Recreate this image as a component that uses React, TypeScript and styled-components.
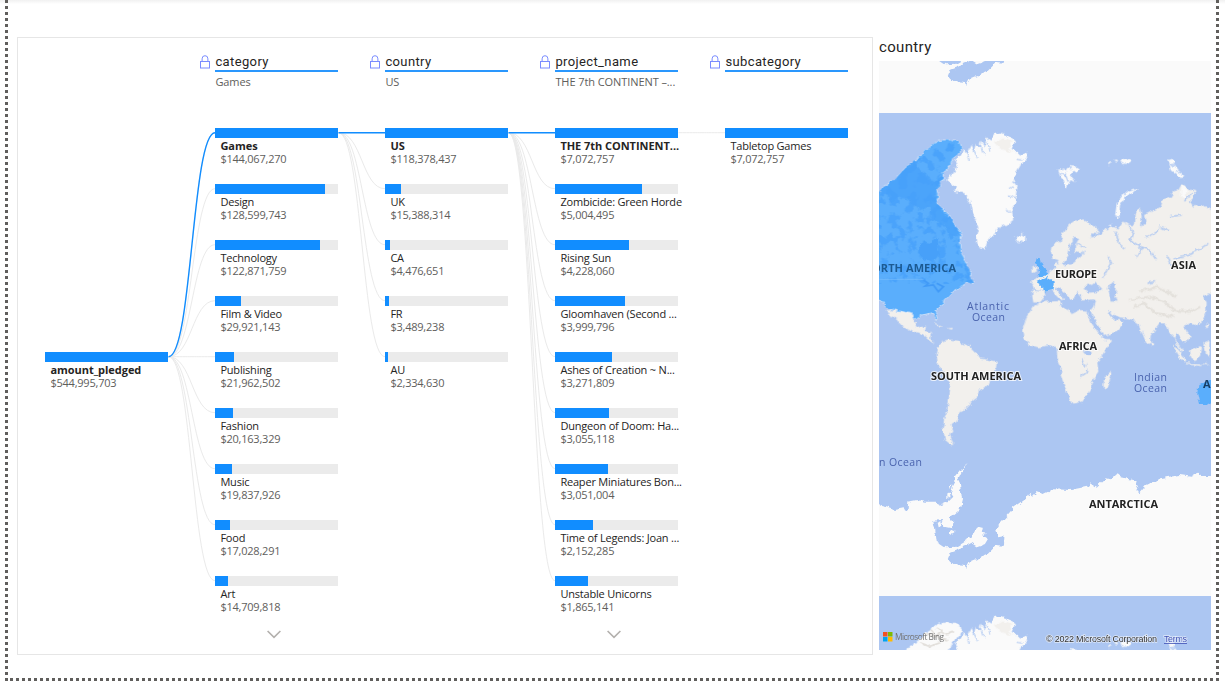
import React from "react";
import styled, { createGlobalStyle } from "styled-components";

const GlobalStyle = createGlobalStyle`
  * { box-sizing: border-box; }
  body { margin: 0; background: #fff; }
`;

const BLUE = "#118dff";
const BAR_W = 123;
const ROW_H = 56;

/* ---------- page ---------- */

const Page = styled.div`
  width: 1225px;
  height: 686px;
  overflow: hidden;
  padding-left: 5px;
  background: linear-gradient(#f1f1f1, #fff 4px);
`;

const Canvas = styled.main`
  width: 1214px;
  height: 681px;
  display: flex;
  align-items: flex-start;
  gap: 6px;
  padding: 37px 0 0 12px;
  background:
    repeating-linear-gradient(180deg, #605e5c 0 3px, transparent 3px 6px) left top / 3px 100% no-repeat,
    repeating-linear-gradient(180deg, #605e5c 0 3px, transparent 3px 6px) right top / 3px 100% no-repeat,
    repeating-linear-gradient(90deg, #605e5c 0 3px, transparent 3px 6px) 5px 678px / 1206px 3px no-repeat;
`;

/* ---------- decomposition tree ---------- */

const TreeCard = styled.section`
  flex: none;
  width: 856px;
  height: 618px;
  border: 1px solid #e6e6e6;
  display: flex;
  padding-left: 27.4px;
  font-family: "Open Sans", "Noto Sans", sans-serif;
`;

const Column = styled.div`
  width: ${BAR_W}px;
  flex: none;
  display: flex;
  flex-direction: column;
`;

const ColumnHead = styled.header`
  height: 90px;
  padding-top: 15px;
  margin-left: -15px;
`;

const HeadTitle = styled.div`
  display: flex;
  align-items: center;
  height: 17px;
  gap: 5px;
  font: 13px/17px Roboto, sans-serif;
  letter-spacing: 0.38px;
  color: #252423;
  white-space: nowrap;
`;

const HeadRule = styled.div`
  height: 2px;
  margin: 0 0 0 15px;
  background: #2a97fd;
`;

const HeadValue = styled.div`
  margin: 2px 0 0 15px;
  font-size: 11px;
  line-height: 16px;
  letter-spacing: -0.08px;
  color: #605e5c;
  white-space: nowrap;
`;

const Node = styled.div`
  height: ${ROW_H}px;
`;

const Track = styled.div`
  height: 10px;
  background: #ebebeb;
`;

const Fill = styled.div`
  height: 10px;
  background: ${BLUE};
`;

const NodeName = styled.div<{ $bold?: boolean }>`
  padding: 1px 0 0 5px;
  height: 15px;
  font-size: 11px;
  line-height: 14px;
  font-weight: ${(p) => (p.$bold ? 700 : 400)};
  letter-spacing: ${(p) => (p.$bold ? "-0.04px" : "-0.2px")};
  color: #252423;
  white-space: nowrap;
`;

const NodeValue = styled.div`
  padding-left: 5px;
  font-size: 11px;
  line-height: 12px;
  letter-spacing: -0.22px;
  color: #605e5c;
`;

const More = styled.div`
  display: flex;
  justify-content: center;
  margin: -2px 0 0 -6px;
`;

const Links = styled.svg`
  flex: none;
  width: 47px;
  height: 616px;
  fill: none;
`;

type Item = { name: string; value: number };
type Level = { field: string; chosen?: string; items: Item[]; more?: boolean; open?: boolean };

const LEVELS: Level[] = [
  {
    field: "category",
    chosen: "Games",
    more: true,
    open: true,
    items: [
      { name: "Games", value: 144067270 },
      { name: "Design", value: 128599743 },
      { name: "Technology", value: 122871759 },
      { name: "Film & Video", value: 29921143 },
      { name: "Publishing", value: 21962502 },
      { name: "Fashion", value: 20163329 },
      { name: "Music", value: 19837926 },
      { name: "Food", value: 17028291 },
      { name: "Art", value: 14709818 },
    ],
  },
  {
    field: "country",
    chosen: "US",
    open: true,
    items: [
      { name: "US", value: 118378437 },
      { name: "UK", value: 15388314 },
      { name: "CA", value: 4476651 },
      { name: "FR", value: 3489238 },
      { name: "AU", value: 2334630 },
    ],
  },
  {
    field: "project_name",
    chosen: "THE 7th CONTINENT –...",
    more: true,
    open: true,
    items: [
      { name: "THE 7th CONTINENT...", value: 7072757 },
      { name: "Zombicide: Green Horde", value: 5004495 },
      { name: "Rising Sun", value: 4228060 },
      { name: "Gloomhaven (Second ...", value: 3999796 },
      { name: "Ashes of Creation ~ N...", value: 3271809 },
      { name: "Dungeon of Doom: Ha...", value: 3055118 },
      { name: "Reaper Miniatures Bon...", value: 3051004 },
      { name: "Time of Legends: Joan ...", value: 2152285 },
      { name: "Unstable Unicorns", value: 1865141 },
    ],
  },
  { field: "subcategory", items: [{ name: "Tabletop Games", value: 7072757 }] },
];

const money = (n: number) => "$" + n.toLocaleString("en-US");

const LockIcon = () => (
  <svg width="10" height="14" viewBox="0 0 10 14" fill="none" stroke="#7a8cff">
    <path d="M2.1 6.5V3.8a2.9 3.1 0 0 1 5.8 0v2.7" />
    <rect x="0.5" y="6.5" width="9" height="6.5" />
  </svg>
);

const Chevron = () => (
  <svg width="14" height="9" viewBox="0 0 14 9" fill="none" stroke="#b3b0ad" strokeWidth="1.6">
    <path d="M0.6 1 7 7.4 13.4 1" />
  </svg>
);

const TreeNode = ({ item, max, bold }: { item: Item; max: number; bold?: boolean }) => (
  <Node>
    <Track>
      <Fill style={{ width: (item.value / max) * BAR_W }} />
    </Track>
    <NodeName $bold={bold}>{item.name}</NodeName>
    <NodeValue>{money(item.value)}</NodeValue>
  </Node>
);

const FIRST_Y = 94.7;

const LinkFan = ({ from, count, active }: { from: number; count: number; active: boolean }) => {
  const y0 = FIRST_Y + from * ROW_H;
  const path = (i: number) => {
    const y1 = FIRST_Y + i * ROW_H;
    return `M0.5 ${y0}C24 ${y0} 24 ${y1} 47 ${y1}`;
  };
  return (
    <Links viewBox="0 0 47 616">
      {Array.from({ length: count }, (_, i) => (
        <path key={i} d={path(i)} stroke="#eaeaea" />
      ))}
      {active && <path d={path(0)} stroke={BLUE} strokeWidth="1.4" />}
    </Links>
  );
};

const RootSpacer = styled.div`
  height: 314px;
`;

const Tree = () => (
  <TreeCard>
    <Column>
      <RootSpacer />
      <TreeNode item={{ name: "amount_pledged", value: 544995703 }} max={544995703} bold />
    </Column>
    {LEVELS.map((level, i) => (
      <React.Fragment key={level.field}>
        <LinkFan from={i === 0 ? 4 : 0} count={level.items.length} active={!!level.open} />
        <Column>
          <ColumnHead>
            <HeadTitle>
              <LockIcon />
              {level.field}
            </HeadTitle>
            <HeadRule />
            <HeadValue>{level.chosen}</HeadValue>
          </ColumnHead>
          {level.items.map((item, k) => (
            <TreeNode key={item.name} item={item} max={level.items[0].value} bold={k === 0 && level.open} />
          ))}
          {level.more && (
            <More>
              <Chevron />
            </More>
          )}
        </Column>
      </React.Fragment>
    ))}
  </TreeCard>
);

/* ---------- map ---------- */

const MapCard = styled.section`
  width: 332px;
`;

const MapTitle = styled.h2`
  margin: 0;
  height: 24px;
  font: 400 15px/20px Roboto, sans-serif;
  letter-spacing: 0.35px;
  color: #252423;
`;

const MapView = styled.svg`
  display: block;
  width: 332px;
  height: 589px;
  background: #acc6f2;
`;

const LabelText = styled.text`
  font: 700 11px "Open Sans", sans-serif;
  fill: #222;
  stroke: rgba(255, 255, 255, 0.75);
  stroke-width: 2px;
  paint-order: stroke;
`;

const OceanText = styled.text`
  font: 10.5px "Open Sans", sans-serif;
  fill: #4a63ae;
`;

const CreditText = styled.text`
  font: 9px "Liberation Sans", sans-serif;
  fill: #333;
  stroke: rgba(255, 255, 255, 0.6);
  stroke-width: 1.5px;
  paint-order: stroke;
`;

const LAND = "#f2f0ed";
const ICE = "#fafafa";
const SEA = "#acc6f2";
const PICKED = "#5aaefc";

const AMERICA =
  "M20 250 40 232 55 222 60 212 78 205 95 185 120 160 132 152 138 156 145 148 152 138 165 120 180 112 195 100 215 90 235 90 255 90 272 102 275 120 262 135 248 145 240 160 230 180 218 190 222 205 210 212 212 230 200 240 205 255 200 280 212 290 225 305 245 325 250 340 272 365 272 380 268 395 275 430 285 455 300 480 300 500 312 515 305 522 290 515 270 535 250 545 240 555 225 570 222 582 210 590 195 605 202 625 198 632 190 615 180 610 155 615 130 628 125 612 100 605 60 598 45 590 30 570 20 560Z";

/* One full turn of the world, in thirds of a pixel. */
const World = ({ top, picked }: { top: number; picked?: boolean }) => (
  <g transform={`translate(870 ${top}) scale(0.33333)`}>
    <g filter="url(#coast)">
      <path fill={ICE} d="M232 205 250 190 262 165 255 150 275 135 282 118 290 135 302 108 310 128 318 100 328 112 332 92 345 110 348 82 362 92 375 72 395 68 415 78 435 95 425 115 440 130 455 138 470 125 475 145 455 160 440 185 430 215 442 230 438 250 440 275 425 300 430 330 410 345 390 350 380 365 360 385 350 400 345 418 330 415 322 400 320 375 325 355 315 330 305 300 300 275 285 250 250 245 258 232 240 220Z" />
      <path fill={LAND} d="M375 95 400 85 425 95 415 115 430 128 400 120 385 112Z" />
      <path fill="none" stroke={SEA} strokeWidth="3" d="M290 130 298 155M310 115 322 145M330 105 345 135M350 95 362 125M432 235 418 232M438 262 412 258M425 310 408 300M305 330 318 328M455 150 440 148" />
      <path fill={ICE} d="M435 385 440 376 450 378 455 372 466 378 465 390 448 400Z" />
      <path fill={LAND} d="M484 475 498 467 500 485 485 489ZM487 542 520 545 524 560 510 577 490 577 487 560Z" />
      <path fill={LAND} d="M50 600 62 625 75 620 90 645 130 665 155 670 165 678 185 695 197 702 180 682 187 668 165 663 168 650 150 652 140 648 130 630 125 612 100 603Z" />
      <path fill={LAND} d="M205 710 215 695 235 688 265 692 275 700 300 710 320 730 325 745 350 748 380 755 378 775 360 805 355 825 330 840 325 860 305 875 300 885 285 900 265 910 260 935 245 945 250 965 240 975 250 1002 240 1002 225 990 218 955 222 930 232 905 235 880 240 840 240 810 220 785 203 760 200 735ZM190 638 205 642 220 650 205 648ZM232 655 248 653 246 659Z" />
      <g transform="translate(510 0)">
        <path fill={LAND} d="M20 490 38 478 45 470 48 455 60 462 75 465 95 460 120 440 130 430 135 425 150 400 150 385 175 375 190 365 195 352 205 362 215 350 235 355 250 335 265 345 285 345 287 310 300 292 305 320 303 350 318 340 312 315 335 305 360 290 365 270 390 260 400 245 415 240 425 222 440 235 465 240 467 255 450 275 460 290 480 285 520 300 520 555 505 550 490 562 500 580 498 610 485 635 465 645 450 640 430 650 440 665 452 680 440 695 425 690 412 670 405 685 415 705 428 722 423 725 410 705 400 680 385 665 375 640 360 640 345 660 332 680 330 700 320 702 305 665 300 645 280 630 265 625 240 622 215 612 206 600 202 604 214 620 228 632 238 626 250 640 232 662 192 678 165 630 150 603 160 590 165 575 160 568 125 572 122 560 115 545 105 560 90 567 82 555 60 535 48 530 48 540 68 560 75 568 65 570 50 555 35 540 15 545-15 540-20 525-30 512 0 500Z" />
        <path fill={LAND} d="M35 410 50 400 62 390 68 370 80 350 100 335 120 325 150 340 165 350 178 360 170 372 150 370 150 380 165 385 155 400 140 420 120 430 105 425 105 405 118 385 105 380 90 405 85 440 70 460 60 465 55 450 38 445 32 425Z" />
        <path fill={LAND} d="M5 577-20 590-40 620-53 660-50 685-30 705-5 712 30 705 50 715 52 745 65 775 62 795 75 830 90 875 95 882 125 875 150 840 158 810 175 785 172 755 190 730 217 690 195 690 178 672 155 640 138 602 120 600 95 612 85 597 65 590 60 575 50 573 25 575Z" />
        <path fill={LAND} d="M190 825 195 800 212 785 213 800 203 832 193 838ZM334 695 342 700 340 707 334 704ZM400 710 412 715 440 755 436 758 420 745ZM440 760 485 764 484 768 442 764ZM450 722 478 708 486 715 483 738 465 750 453 742ZM495 650 505 640 503 660ZM490 700 512 690 508 740 495 730ZM480 760 508 763 500 766Z" />
        <path fill={SEA} d="M130 535 145 520 155 525 165 518 187 540 170 546 145 548ZM203 535 218 516 228 522 222 536 232 550 226 560 233 575 215 575 210 555ZM128 724 142 720 152 728 150 738 138 735Z" />
        <path fill="none" stroke={SEA} strokeWidth="4" d="M265 350 280 365 270 390 300 410 330 420 350 450M225 365 240 405 255 415M205 440 212 460 190 500M385 440 395 470M320 380 345 370 360 350M390 320 425 315M400 445 460 430 505 400M365 350 385 360M320 520 345 515M110 400 135 410M128 745 138 770M145 780 120 800M310 410 290 440M460 250 430 270" />
        <path fill="none" stroke="#e4e1dc" strokeWidth="7" d="M270 570 330 560 380 580 400 600 450 605 480 590M280 590 310 580 350 610 400 620M300 545 350 530 410 560" />
        <path fill={ICE} d="M225 315 230 280 245 260 270 240 290 235 285 245 255 262 240 285 238 322ZM55 180 75 175 80 185 90 168 120 172 112 185 95 188 92 200 107 218 92 210 78 236 72 215 62 205ZM385 150 400 146 405 165 417 182 433 198 425 210 412 195 393 182ZM425 225 440 240 438 262 422 258ZM200 160 212 156 208 165ZM222 150 236 148 230 155ZM240 155 255 145 275 150 262 160 250 162ZM205 345 212 340 214 350Z" />
        <path fill="none" stroke={SEA} strokeWidth="4" d="M60 190 80 200M75 190 85 215M95 180 88 170M390 165 408 162M408 186 425 182" />
      </g>
      <g transform="translate(0 1020)">
        <path fill={ICE} d="M20 165 50 172 75 180 100 175 112 182 115 155 140 150 165 155 195 155 215 165 235 155 250 140 243 130 248 110 256 95 254 80 270 60 293 42 276 62 264 88 270 100 276 150 268 180 250 195 235 205 250 215 245 235 222 230 215 210 190 212 195 235 200 275 225 292 260 290 285 275 290 265 305 260 310 245 325 230 342 235 335 245 348 248 338 256 352 265 340 285 325 290 305 278 275 295 240 308 233 325 250 342 285 345 287 360 300 335 350 315 380 285 402 287 403 258 385 262 378 240 390 220 430 175 470 145 480 128 490 137 500 126 520 132 550 118 600 120 660 108 660 100 680 113 710 85 722 88 740 70 755 82 800 92 797 105 808 130 830 105 870 85 930 75 965 80 985 68 1000 78 1050 78 1050 400 0 400 0 165ZM200 218 212 214 214 228 203 232ZM238 250 254 241 250 251 240 256ZM232 130 240 128 242 145 232 145ZM238 105 244 100 243 118Z" />
      </g>
    </g>
    <rect x="20" y="1390" width="1010" height="68" fill={ICE} />
    <g filter="url(#coast)">
      <path d={AMERICA} fill={picked ? PICKED : ICE} stroke="#e9f0fb" strokeWidth="2" />
    </g>
    {!picked && (
      <path
        filter="url(#coast)"
        fill="none"
        stroke="#e3e0dc"
        strokeWidth="6"
        d="M165 125 190 130 215 120M185 110 205 135 235 140M200 105 230 125 255 115M150 150 180 160 210 150"
      />
    )}
    {picked && (
      <>
        <g clipPath="url(#america)">
          <rect x="20" y="80" width="300" height="440" opacity=".8" filter="url(#lakes)" />
          <g filter="url(#coast)" fill="#47a0f9">
            <path d="M147 410 160 395 185 400 195 385 205 390 200 410 210 430 190 450 165 452 150 435Z" />
            <path d="M60 215 95 185 130 152 155 185 180 205 205 215 195 260 212 300 250 330 268 375 240 385 225 350 195 330 180 290 150 300 120 270 85 260 60 280 50 250Z" opacity=".75" />
          </g>
          <path d="M27 508H160" stroke="#7cc0fc" strokeWidth="2" />
          <path d="M160 510 175 520 165 528 190 525 205 545 220 530 200 520" fill="none" stroke="#419af7" strokeWidth="5" />
        </g>
        <g filter="url(#coast)" fill={PICKED}>
          <path d="M497 455 500 445 512 443 515 458 528 480 532 495 515 502 505 500 510 485 503 475ZM502 513 530 500 535 497 535 505 555 515 550 540 525 545 517 542 516 522Z" />
          <path d="M1030 800 1010 815 985 825 982 850 990 885 1005 885 1030 876Z" />
        </g>
      </>
    )}
  </g>
);

const WorldMap = () => (
  <MapView viewBox="879 61 332 589">
    <defs>
      <filter id="coast" x="-5%" y="-5%" width="110%" height="110%" colorInterpolationFilters="sRGB">
        <feTurbulence type="fractalNoise" baseFrequency="0.06" numOctaves="3" seed="4" />
        <feDisplacementMap in="SourceGraphic" scale="16" xChannelSelector="R" yChannelSelector="G" />
      </filter>
      <filter id="lakes" x="0" y="0" width="100%" height="100%" colorInterpolationFilters="sRGB">
        <feTurbulence type="fractalNoise" baseFrequency="0.035" numOctaves="4" seed="9" />
        <feColorMatrix values="0 0 0 0 0.28 0 0 0 0 0.63 0 0 0 0 0.98 10 0 0 0 -5.2" />
      </filter>
      <clipPath id="america">
        <path d={AMERICA} />
      </clipPath>
    </defs>
    <World top={-373} />
    <World top={110} picked />
    <World top={593} />
    <LabelText x="863" y="272" textLength="93" style={{ fill: "#1c5a92", stroke: "none" }}>NORTH AMERICA</LabelText>
    <LabelText x="1055" y="278" textLength="42">EUROPE</LabelText>
    <LabelText x="1171" y="269" textLength="25">ASIA</LabelText>
    <LabelText x="1059" y="350" textLength="38">AFRICA</LabelText>
    <LabelText x="931" y="380" textLength="90">SOUTH AMERICA</LabelText>
    <LabelText x="1089" y="508" textLength="69">ANTARCTICA</LabelText>
    <LabelText x="1203" y="388" style={{ fill: "#173f66", stroke: "none" }}>AUSTRALIA</LabelText>
    <OceanText x="967" y="310" textLength="42">Atlantic</OceanText>
    <OceanText x="972" y="321" textLength="33">Ocean</OceanText>
    <OceanText x="1134" y="381" textLength="33">Indian</OceanText>
    <OceanText x="1134" y="392" textLength="33">Ocean</OceanText>
    <OceanText x="837" y="466" textLength="85">Southern Ocean</OceanText>
    <rect x="883" y="632" width="4.5" height="4.5" fill="#f25022" />
    <rect x="888" y="632" width="4.5" height="4.5" fill="#7fba00" />
    <rect x="883" y="637" width="4.5" height="4.5" fill="#00a4ef" />
    <rect x="888" y="637" width="4.5" height="4.5" fill="#ffb900" />
    <text x="895" y="640" textLength="49" fontFamily="Open Sans, sans-serif" fontSize="8.3" fill="#737373">Microsoft Bing</text>
    <CreditText x="1046" y="642" textLength="111">© 2022 Microsoft Corporation</CreditText>
    <CreditText x="1164" y="642" textLength="23" style={{ fill: "#3f51b5" }}>Terms</CreditText>
    <path d="M1164 643.5H1187" stroke="#3f51b5" strokeWidth=".8" />
  </MapView>
);

export default function App() {
  return (
    <Page>
      <GlobalStyle />
      <Canvas>
        <Tree />
        <MapCard>
          <MapTitle>country</MapTitle>
          <WorldMap />
        </MapCard>
      </Canvas>
    </Page>
  );
}
